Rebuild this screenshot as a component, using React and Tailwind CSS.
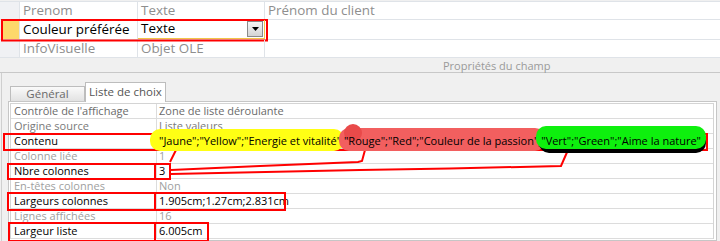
import React from "react";

const topRows = [
  { name: "Prenom", type: "Texte", desc: "Prénom du client", h: "h-[18px]", active: false },
  { name: "Couleur préférée", type: "Texte", desc: "", h: "h-[20px]", active: true },
  { name: "InfoVisuelle", type: "Objet OLE", desc: "", h: "h-[18px]", active: false },
];

const props = [
  { l: "Contrôle de l'affichage", v: "Zone de liste déroulante", c: "text-[#6a6a6a]" },
  { l: "Origine source", v: "Liste valeurs", c: "text-[#7a7a7a]" },
  { l: "Contenu", v: null, c: "text-black" },
  { l: "Colonne liée", v: "1", c: "text-[#a0a0a0]" },
  { l: "Nbre colonnes", v: "3", c: "text-black" },
  { l: "En-têtes colonnes", v: "Non", c: "text-[#a0a0a0]" },
  { l: "Largeurs colonnes", v: "1.905cm;1.27cm;2.831cm", c: "text-black" },
  { l: "Lignes affichées", v: "16", c: "text-[#a0a0a0]" },
  { l: "Largeur liste", v: "6.005cm", c: "text-black" },
];

function Contenu() {
  return (
    <span className="whitespace-nowrap">
      <span className="relative">
        <span className="absolute -left-[9px] -right-[3px] -top-[4px] -bottom-[3px] rounded-[10px] bg-[#ffff14]" />
        <span className="relative">"Jaune";"Yellow";"Energie et vitalité"</span>
      </span>
      <span className="relative">;</span>
      <span className="relative">
        <span className="absolute -left-[5px] -right-[7px] -top-[5px] -bottom-[3px] rounded-[10px] bg-[#f25f5f]" />
        <span className="absolute left-[0px] -top-[9px] w-[18px] h-[18px] rounded-full bg-[#e94a4a]" />
        <span className="relative">"Rouge";"Red";"Couleur de la passion"</span>
      </span>
      <span className="relative">;</span>
      <span className="relative">
        <span className="absolute -left-[2px] -right-[5px] -top-[2px] -bottom-[5px] rounded-[10px] bg-black" />
        <span className="absolute -left-[5px] -right-[5px] -top-[7px] -bottom-[1px] rounded-[10px] bg-[#0ef00e]" />
        <span className="relative">"Vert";"Green";"Aime la nature"</span>
      </span>
    </span>
  );
}

export default function App() {
  return (
    <div className="relative w-[720px] h-[241px] overflow-hidden bg-[#f0f0f0] font-['Open_Sans','Noto_Sans',sans-serif] flex flex-col">
      <svg className="absolute inset-0 pointer-events-none" width="720" height="241" fill="none" stroke="#ff0000" strokeWidth="2">
        <rect x="2" y="20" width="265" height="20.5" />
        <rect x="4" y="134" width="151" height="16" />
        <rect x="155" y="134" width="552" height="16" />
        <rect x="8" y="164" width="147" height="15" />
        <rect x="155" y="164" width="15" height="15" />
        <rect x="8" y="193" width="147" height="17" />
        <rect x="155" y="193" width="130" height="17" />
        <rect x="9" y="223" width="146" height="18" />
        <rect x="155" y="223" width="53" height="18" />
        <polyline points="176,150 170,162" />
        <polyline points="171,170 260,166 358,162 362,161 365,150" />
        <polyline points="171,174 360,170 450,168.5 561,166 568,150" />
      </svg>

      {/* top design grid */}
      <div className="mt-px bg-white border-t border-[#dfe3e8]">
        {topRows.map((r, i) => (
          <div key={i} className={`flex ${r.h} border-b border-[#dfe3e8]`}>
            <div className={`w-[20px] border-r border-[#dfe3e8] ${r.active ? "bg-[#f0f1f4] pl-[3px]" : "bg-[#f0f1f4]"}`}>
              {r.active && <div className="h-full bg-[#fdd86b]" />}
            </div>
            <div className={`w-[118px] border-r border-[#dfe3e8] pl-[3px] flex items-center text-[13.4px] leading-none ${r.active ? "text-black" : "text-[#8e8e8e]"}`}>
              {r.name}
            </div>
            <div className={`relative w-[127px] border-r ${r.active ? "border-[#f2c447] border-b" : "border-[#dfe3e8]"} pl-[3px] flex items-center text-[13.4px] leading-none ${r.active ? "text-black" : "text-[#8e8e8e]"}`}>
              {r.type}
              {r.active && (
                <div className="absolute right-[1px] top-[1px] w-[16px] h-[16px] border border-[#8a8a8a] bg-gradient-to-b from-[#f6f6f6] to-[#d4d4d4] flex items-center justify-center">
                  <svg width="7" height="4" viewBox="0 0 7 4"><polygon points="0,0 7,0 3.5,4" fill="#000" /></svg>
                </div>
              )}
            </div>
            <div className="flex-1 pl-[3px] flex items-center text-[13.4px] leading-none text-[#8e8e8e]">{r.desc}</div>
          </div>
        ))}
      </div>

      {/* band */}
      <div className="h-[15px] bg-[#f0f0f0] border-b border-[#c8c8c8] pl-[443px] flex items-center text-[11px] leading-none text-[#9a9a9a]">
        Propriétés du champ
      </div>

      {/* lower area */}
      <div className="flex-1 ml-px border-l border-[#cfcfcf] pl-[6px] pt-[9px] flex flex-col">
        <div className="flex items-end ml-[2px] h-[19px]">
          <div className="w-[75px] h-[15px] border border-b-0 border-[#bdbdbd] bg-gradient-to-b from-[#fafafa] to-[#e2e2e2] flex items-center justify-center text-[11.5px] leading-none text-[#6a6a6a]">
            Général
          </div>
          <div className="relative w-[81px] h-[20px] -mb-px border border-b-0 border-[#bdbdbd] bg-white flex items-center justify-center text-[11.5px] leading-none text-[#555] pb-[2px]">
            Liste de choix
          </div>
        </div>
        <div className="w-[709px] flex-1 border border-[#c6c6c6] bg-white pl-px pr-[2px] pt-px">
          <div className="border border-[#d4d4d4] border-b-0">
            {props.map((p, i) => (
              <div key={i} className={`flex h-[15px] border-b border-[#dcdcdc] text-[11px] leading-[14px] ${p.c}`}>
                <div className="w-[146px] border-r border-[#dcdcdc] pl-[3px] whitespace-nowrap">{p.l}</div>
                <div className="flex-1 pl-[2px] whitespace-nowrap">{p.v === null ? <Contenu /> : p.v}</div>
              </div>
            ))}
          </div>
        </div>
      </div>
    </div>
  );
}
